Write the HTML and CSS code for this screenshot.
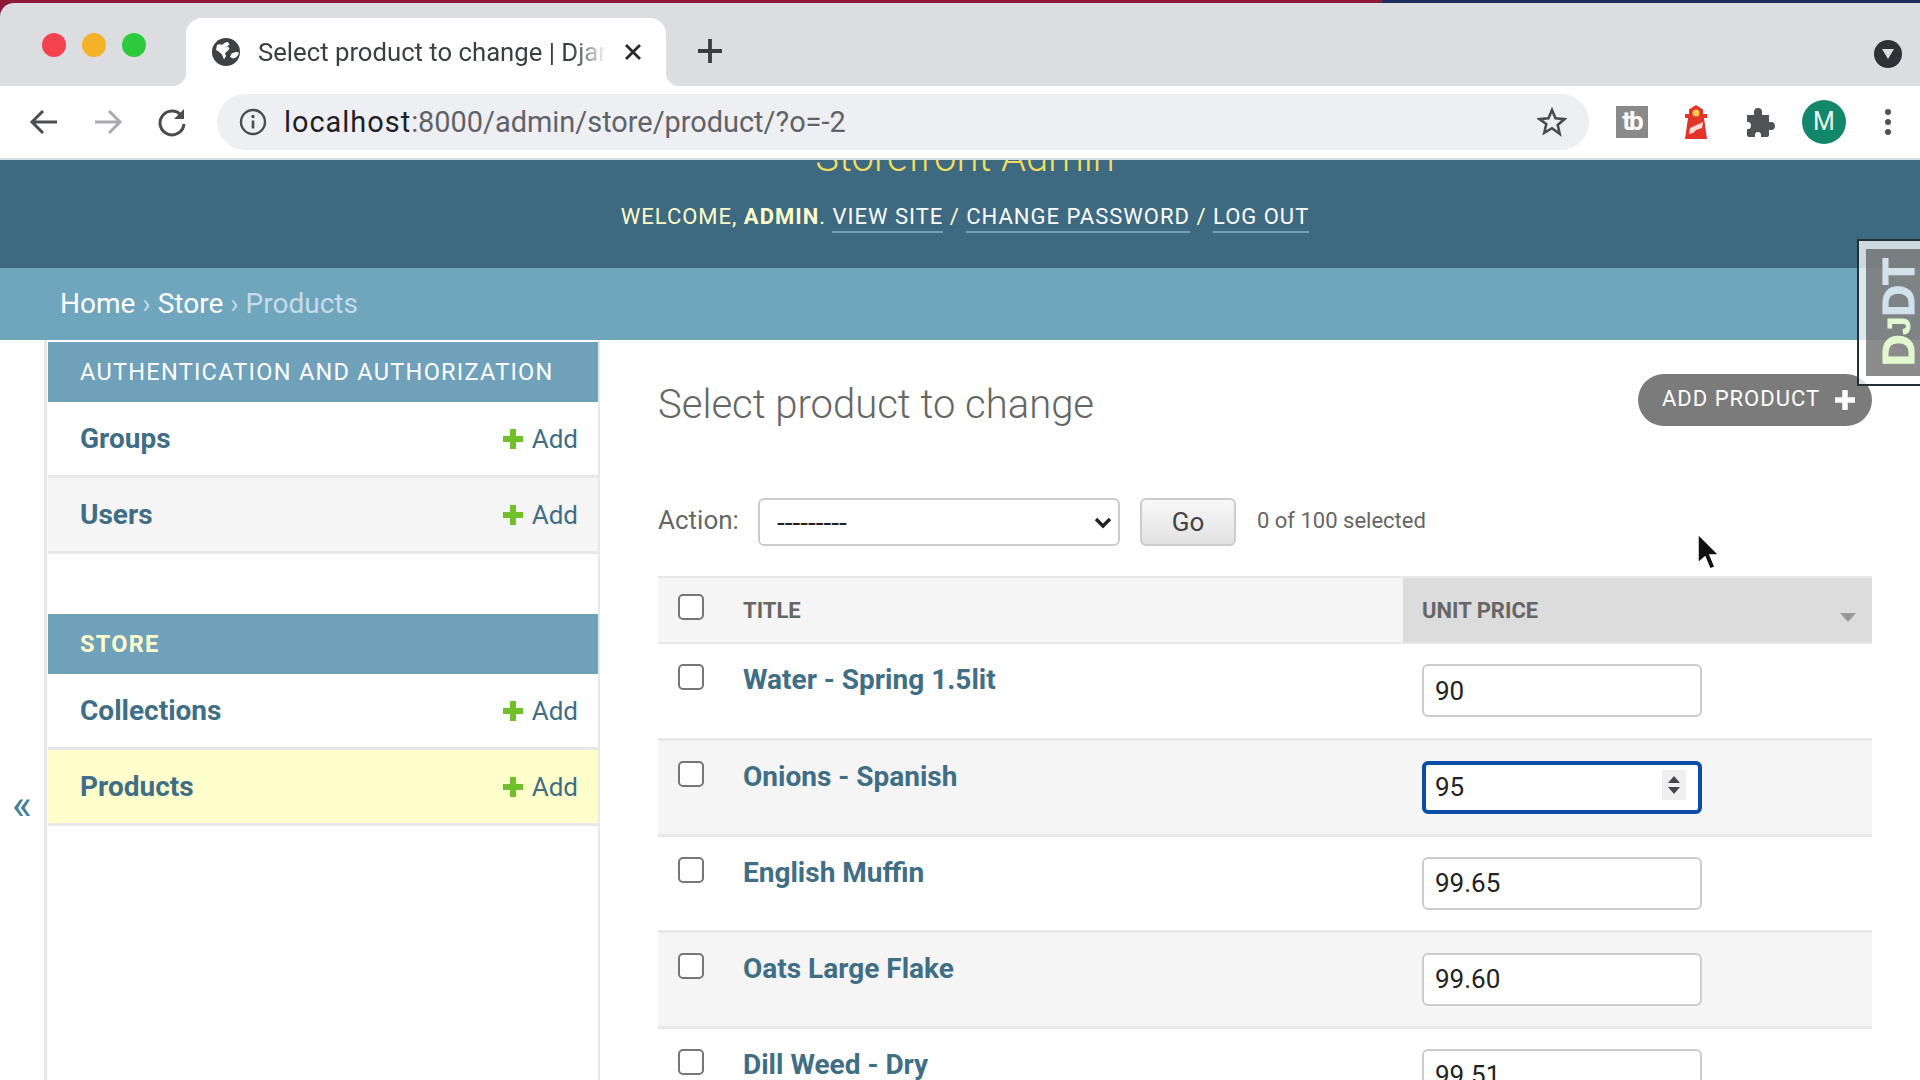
FILE: index.html
```html
<!DOCTYPE html>
<html lang="en">
<head>
    <meta charset="UTF-8">
    <title>Select product to change | Django site admin</title>
    <link rel="stylesheet" href="styles.css">
</head>
<body>
    <!-- Browser chrome -->
    <div class="tabstrip">
        <div class="lights">
            <span class="light red"></span>
            <span class="light yellow"></span>
            <span class="light green"></span>
        </div>
        <div class="tab">
            <svg class="globe" width="30" height="30" viewBox="0 0 30 30">
                <circle cx="15" cy="15" r="14" fill="#3f4145"/>
                <path d="M6 8c2-1 4-1 6 .5l3 2 2-1 1.500 2-2.500 3-2 1.500 1 3-2 3.500-2-5-4-3.500-2-1z" fill="#fff"/>
                <path d="M10 9.500c2-3 4-4.500 7-4.500l1.500 2.500-3 2.500z" fill="#fff"/>
                <path d="M19 20l1.500-3.500 4-1.500 3.500.5c-.5 2-1.500 3.500-3 5l-3 1z" fill="#fff"/>
            </svg>
            <span class="tab-title">Select product to change | Django site admin</span>
            <svg class="tab-close" width="20" height="20" viewBox="0 0 20 20">
                <path d="M3 3l14 14M17 3L3 17" stroke="#26282b" stroke-width="2.800"/>
            </svg>
        </div>
        <svg class="new-tab" width="26" height="26" viewBox="0 0 26 26">
            <path d="M13 1v24M1 13h24" stroke="#3a3c40" stroke-width="3.800"/>
        </svg>
        <div class="tab-menu">
            <svg width="14" height="12" viewBox="0 0 14 12"><path d="M1 1h12L7 11z" fill="#dcdde1"/></svg>
        </div>
    </div>

    <div class="toolbar">
        <svg class="nav-icon" width="30" height="30" viewBox="0 0 30 30">
            <path d="M28 15H4M14 4L3 15l11 11" fill="none" stroke="#4a4c50" stroke-width="3"/>
        </svg>
        <svg class="nav-icon" width="30" height="30" viewBox="0 0 30 30">
            <path d="M2 15h24M16 4l11 11-11 11" fill="none" stroke="#a9abae" stroke-width="3"/>
        </svg>
        <svg class="nav-icon" width="30" height="30" viewBox="0 0 30 30">
            <path d="M24.500 8.500A12 12 0 1 0 27 17" fill="none" stroke="#4a4c50" stroke-width="3"/>
            <path d="M27 2v10H17z" fill="#4a4c50"/>
        </svg>
        <div class="omnibox">
            <svg width="28" height="28" viewBox="0 0 28 28">
                <circle cx="14" cy="14" r="12" fill="none" stroke="#4a4c50" stroke-width="2.400"/>
                <path d="M14 12.500v8" stroke="#4a4c50" stroke-width="2.600"/>
                <circle cx="14" cy="8.500" r="1.700" fill="#4a4c50"/>
            </svg>
            <div class="url"><span class="host">localhost</span>:8000/admin/store/product/?o=-2</div>
            <svg class="star" width="30" height="30" viewBox="0 0 30 30">
                <path d="M15 3l3.500 8.300 9 .8-6.800 5.900 2 8.800L15 21.200l-7.700 4.600 2-8.800L2.500 12.100l9-.8z" fill="none" stroke="#4a4c50" stroke-width="2.600" stroke-linejoin="miter"/>
            </svg>
        </div>
        <div class="extensions">
            <span class="ext-tb">tb</span>
            <svg width="32" height="34" viewBox="0 0 32 34">
                <path d="M16 0l7 4.500V9h4v4h-3l3 21H5l3-21H5V9h4V4.500z" fill="#e3342a"/>
                <circle cx="16" cy="8" r="3.500" fill="#f7cb4d"/>
                <path d="M9 29l1-6 13-6-1 6-6 2-3 3z" fill="#f8dcd8"/>
            </svg>
            <svg width="30" height="30" viewBox="0 0 30 30">
                <path d="M2 8h7V5a4 4 0 0 1 8 0v3h7v7h2a4 4 0 0 1 0 8h-2v5a2 2 0 0 1-2 2h-6v-2a3 3 0 0 0-6 0v2H4a2 2 0 0 1-2-2v-6h2a4 4 0 0 0 0-7H2z" fill="#505256"/>
            </svg>
            <span class="avatar">M</span>
            <svg width="8" height="28" viewBox="0 0 8 28">
                <circle cx="4" cy="4" r="3" fill="#505256"/>
                <circle cx="4" cy="14" r="3" fill="#505256"/>
                <circle cx="4" cy="24" r="3" fill="#505256"/>
            </svg>
        </div>
    </div>

    <!-- Page -->
    <div class="page">
        <header class="site-header">
            <h1 class="branding">Storefront Admin</h1>
            <div class="user-tools">
                Welcome, <strong>admin</strong>. <a>View site</a> / <a>Change password</a> / <a>Log out</a>
            </div>
        </header>
        <nav class="breadcrumbs">
            <a>Home</a> <span class="sep">›</span> <a>Store</a> <span class="sep">›</span> <span class="current">Products</span>
        </nav>

        <div class="main">
            <div class="toggle-col"><span class="toggle">«</span></div>
            <aside class="sidebar">
                <section class="module">
                    <h2 class="module-title">Authentication and Authorization</h2>
                    <div class="module-row">
                        <a class="model">Groups</a>
                        <a class="addlink"><svg width="20" height="20" viewBox="0 0 20 20"><path d="M10 0v20M0 10h20" stroke="#70bf2b" stroke-width="6"/></svg>Add</a>
                    </div>
                    <div class="module-row alt">
                        <a class="model">Users</a>
                        <a class="addlink"><svg width="20" height="20" viewBox="0 0 20 20"><path d="M10 0v20M0 10h20" stroke="#70bf2b" stroke-width="6"/></svg>Add</a>
                    </div>
                </section>
                <section class="module">
                    <h2 class="module-title active">Store</h2>
                    <div class="module-row">
                        <a class="model">Collections</a>
                        <a class="addlink"><svg width="20" height="20" viewBox="0 0 20 20"><path d="M10 0v20M0 10h20" stroke="#70bf2b" stroke-width="6"/></svg>Add</a>
                    </div>
                    <div class="module-row selected">
                        <a class="model">Products</a>
                        <a class="addlink"><svg width="20" height="20" viewBox="0 0 20 20"><path d="M10 0v20M0 10h20" stroke="#70bf2b" stroke-width="6"/></svg>Add</a>
                    </div>
                </section>
            </aside>

            <main class="content">
                <div class="content-head">
                    <h1 class="content-title">Select product to change</h1>
                    <a class="add-product">Add product
                        <svg width="20" height="20" viewBox="0 0 20 20"><path d="M10 0v20M0 10h20" stroke="#fff" stroke-width="5.500"/></svg>
                    </a>
                </div>

                <form class="actions">
                    <label class="action-label" for="action">Action:</label>
                    <div class="select-wrap">
                        <select id="action">
                            <option>---------</option>
                        </select>
                        <svg class="select-arrow" width="18" height="12" viewBox="0 0 18 12"><path d="M2 2l7 7 7-7" fill="none" stroke="#222" stroke-width="3.400"/></svg>
                    </div>
                    <button type="button" class="go">Go</button>
                    <span class="counter">0 of 100 selected</span>
                </form>

                <table class="results">
                    <thead>
                        <tr>
                            <th class="col-check"><input type="checkbox"></th>
                            <th class="col-title">Title</th>
                            <th class="col-price sorted">Unit price<span class="sort-arrow"></span></th>
                        </tr>
                    </thead>
                    <tbody>
                        <tr>
                            <td class="col-check"><input type="checkbox"></td>
                            <td class="col-title"><a>Water - Spring 1.5lit</a></td>
                            <td class="col-price"><input class="price" type="text" value="90"></td>
                        </tr>
                        <tr class="alt">
                            <td class="col-check"><input type="checkbox"></td>
                            <td class="col-title"><a>Onions - Spanish</a></td>
                            <td class="col-price">
                                <div class="price-wrap">
                                    <input class="price focused" type="text" value="95">
                                    <span class="spinner">
                                        <svg width="14" height="20" viewBox="0 0 14 20"><path d="M7 1l6 7H1zM7 19l6-7H1z" fill="#45474a"/></svg>
                                    </span>
                                </div>
                            </td>
                        </tr>
                        <tr>
                            <td class="col-check"><input type="checkbox"></td>
                            <td class="col-title"><a>English Muffin</a></td>
                            <td class="col-price"><input class="price" type="text" value="99.65"></td>
                        </tr>
                        <tr class="alt">
                            <td class="col-check"><input type="checkbox"></td>
                            <td class="col-title"><a>Oats Large Flake</a></td>
                            <td class="col-price"><input class="price" type="text" value="99.60"></td>
                        </tr>
                        <tr>
                            <td class="col-check"><input type="checkbox"></td>
                            <td class="col-title"><a>Dill Weed - Dry</a></td>
                            <td class="col-price"><input class="price" type="text" value="99.51"></td>
                        </tr>
                    </tbody>
                </table>
            </main>
        </div>
    </div>

    <!-- Debug toolbar handle and mouse pointer float over the page -->
    <div class="djdt">
        <div class="djdt-inner"><span class="djdt-text"><span class="dj">D<small>J</small></span>DT</span></div>
    </div>
    <svg class="cursor" width="24" height="38" viewBox="0 0 24 38">
        <path d="M2 1v29l7-6 5 12 5-2-5-12h9z" fill="#111" stroke="#fff" stroke-width="1.500"/>
    </svg>
</body>
</html>
```

FILE: styles.css
```css
* {
    box-sizing: border-box;
}
html, body {
    margin: 0;
    height: 100%;
    overflow: hidden;
}
body {
    position: relative;
    font-family: Roboto, "Liberation Sans", sans-serif;
    background: linear-gradient(to right, #8e1a3a 1382px, #1d2f5c 1382px);
    color: #333;
    width: 1920px;
    height: 1080px;
}
a {
    color: inherit;
    text-decoration: none;
}

/* Browser chrome */
.tabstrip {
    height: 83px;
    margin-top: 3px;
    display: flex;
    align-items: flex-end;
    position: relative;
    background: #dcdde1;
    border-top-left-radius: 14px;
}
.lights {
    width: 186px;
    height: 83px;
    display: flex;
    gap: 16px;
    padding: 30px 0 0 42px;
}
.light {
    width: 24px;
    height: 24px;
    border-radius: 50%;
}
.light.red { background: #f5424f; }
.light.yellow { background: #f5b128; }
.light.green { background: #2ccb3e; }
.tab {
    position: relative;
    width: 480px;
    height: 68px;
    display: flex;
    align-items: center;
    padding: 0 16px 0 25px;
    background: #fff;
    border-radius: 16px 16px 0 0;
}
.tab::before,
.tab::after {
    content: "";
    position: absolute;
    bottom: 0;
    width: 14px;
    height: 14px;
}
.tab::before {
    left: -14px;
    background: radial-gradient(circle at 0 0, transparent 14px, #fff 14.500px);
}
.tab::after {
    right: -14px;
    background: radial-gradient(circle at 100% 0, transparent 14px, #fff 14.500px);
}
.tab-title {
    width: 349px;
    margin-left: 17px;
    font-size: 25.700px;
    color: #3c4043;
    white-space: nowrap;
    overflow: hidden;
    -webkit-mask-image: linear-gradient(to right, #000 90%, transparent 100%);
    mask-image: linear-gradient(to right, #000 90%, transparent 100%);
}
.tab-close {
    margin-left: 16px;
}
.new-tab {
    align-self: center;
    margin-left: 31px;
    position: relative;
    top: 6px;
}
.tab-menu {
    margin-left: auto;
    margin-right: 18px;
    align-self: center;
    width: 28px;
    height: 28px;
    border-radius: 50%;
    background: #2f3136;
    display: flex;
    align-items: center;
    justify-content: center;
    position: relative;
    top: 9px;
}
.toolbar {
    height: 74px;
    display: flex;
    align-items: center;
    padding: 0 0 0 29px;
    gap: 34px;
    background: #fff;
    border-bottom: 2px solid #d5dce3;
}
.nav-icon {
    flex: none;
}
.omnibox {
    width: 1372px;
    height: 56px;
    margin-left: -4px;
    display: flex;
    align-items: center;
    padding: 0 22px 0 22px;
    background: #eeeff3;
    border-radius: 28px;
}
.url {
    margin-left: 17px;
    font-size: 28.900px;
    color: #5f6368;
    white-space: nowrap;
}
.url .host {
    color: #202124;
    letter-spacing: 1px;
}
.star {
    margin-left: auto;
}
.extensions {
    display: flex;
    align-items: center;
    margin-left: -7px;
    flex: none;
}
.ext-tb {
    width: 32px;
    height: 32px;
    background: #8a8a8a;
    color: #fff;
    font-weight: 700;
    font-size: 26px;
    line-height: 30px;
    text-align: center;
    letter-spacing: -2px;
}
.extensions svg:nth-child(2) {
    margin-left: 32px;
}
.extensions svg:nth-child(3) {
    margin-left: 33px;
}
.avatar {
    width: 44px;
    height: 44px;
    margin-left: 27px;
    border-radius: 50%;
    background: #12876a;
    color: #e6f5f0;
    font-size: 25px;
    line-height: 44px;
    text-align: center;
}
.extensions svg:nth-child(5) {
    margin-left: 38px;
}

/* Admin header */
.page {
    height: 920px;
    overflow: hidden;
    background: #fff;
}
.site-header {
    height: 108px;
    overflow: hidden;
    padding-left: 10px;
    background: #3d6a80;
    text-align: center;
}
.branding {
    margin: -22px 0 0;
    font-size: 40px;
    line-height: 40px;
    font-weight: 300;
    color: #f5dd5d;
}
.user-tools {
    margin-top: 24px;
    font-size: 22px;
    font-weight: 400;
    line-height: 30px;
    letter-spacing: 1px;
    text-transform: uppercase;
    color: #ffc;
}
.user-tools strong {
    font-weight: 700;
}
.user-tools a {
    color: #fff;
    padding-bottom: 2px;
    border-bottom: 2px solid #789fb3;
}
.breadcrumbs {
    height: 72px;
    padding-left: 60px;
    font-size: 28px;
    font-weight: 400;
    line-height: 72px;
    background: #70a6bd;
    color: #fff;
}
.breadcrumbs .sep,
.breadcrumbs .current {
    color: #c4dce8;
}

/* Sidebar */
.main {
    display: flex;
    height: 740px;
}
.toggle-col {
    width: 44px;
    flex: none;
    position: relative;
}
.toggle {
    position: absolute;
    top: 435px;
    left: 12px;
    font-size: 42px;
    line-height: 60px;
    color: #447e9b;
}
.sidebar {
    width: 556px;
    flex: none;
    padding-top: 2px;
    background: #fff;
    border-left: 3px solid #e8e8e8;
    border-right: 2px solid #e8e8e8;
    padding-left: 1px;
}
.module {
    margin-bottom: 60px;
}
.module-title {
    margin: 0;
    height: 60px;
    padding-left: 32px;
    font-size: 23.500px;
    font-weight: 400;
    line-height: 60px;
    letter-spacing: 1.280px;
    text-transform: uppercase;
    background: #70a1ba;
    color: #fff;
}
.module-title.active {
    font-weight: 700;
    color: #ffc;
}
.module-row {
    height: 76px;
    display: flex;
    align-items: center;
    justify-content: space-between;
    padding: 0 20px 0 32px;
    border-bottom: 3px solid #e8e8e8;
    background: #fff;
}
.module-row.alt {
    background: #f5f5f5;
}
.module-row.selected {
    background: #ffc;
}
.model {
    font-size: 28px;
    font-weight: 700;
    color: #3f6e85;
}
.addlink {
    display: flex;
    align-items: center;
    gap: 9px;
    font-size: 26px;
    font-weight: 400;
    color: #3f6e85;
}

/* Content */
.content {
    flex: 1;
    min-width: 0;
    padding: 34px 48px 0 58px;
}
.content-head {
    height: 52px;
    display: flex;
    align-items: center;
    justify-content: space-between;
}
.content-title {
    margin: 8px 0 0;
    font-size: 40px;
    font-weight: 300;
    color: #666;
}
.add-product {
    width: 234px;
    height: 52px;
    display: flex;
    align-items: center;
    justify-content: space-between;
    padding: 0 17px 4px 24px;
    border-radius: 26px;
    background: #7b7b7b;
    color: #fff;
    font-size: 22px;
    letter-spacing: 1px;
    text-transform: uppercase;
}
.add-product svg {
    position: relative;
    top: 2px;
}
.actions {
    height: 48px;
    margin-top: 72px;
    display: flex;
    align-items: center;
}
.action-label {
    width: 100px;
    padding-bottom: 4px;
    font-size: 26px;
    font-weight: 400;
    color: #666;
}
.select-wrap {
    position: relative;
    width: 362px;
    height: 48px;
}
.select-wrap select {
    appearance: none;
    width: 362px;
    height: 48px;
    padding: 0 17px;
    font-family: inherit;
    font-size: 28px;
    color: #222;
    background: #fff;
    border: 2px solid #ccc;
    border-radius: 6px;
}
.select-arrow {
    position: absolute;
    top: 19px;
    right: 8px;
}
.go {
    width: 96px;
    height: 48px;
    margin-left: 20px;
    font-family: inherit;
    font-size: 26px;
    color: #444;
    background: linear-gradient(#f8f8f8, #e2e2e2);
    border: 2px solid #ccc;
    border-radius: 6px;
}
.counter {
    margin-left: 21px;
    padding-bottom: 4px;
    font-size: 22px;
    font-weight: 400;
    color: #666;
}

/* Result list */
.results {
    width: 100%;
    margin-top: 30px;
    border-collapse: collapse;
    table-layout: fixed;
}
.results th {
    height: 66px;
    padding: 0;
    text-align: left;
    vertical-align: middle;
    background: #f5f5f5;
    border-top: 2px solid #e8e8e8;
    border-bottom: 2px solid #e8e8e8;
    font-size: 22px;
    font-weight: 700;
    color: #666;
    text-transform: uppercase;
}
.results td {
    height: 96px;
    padding: 0;
    vertical-align: top;
    border-bottom: 3px solid #e8e8e8;
}
.results tr.alt td {
    background: #f5f5f5;
}
.results input[type="checkbox"] {
    appearance: none;
    display: block;
    width: 26px;
    height: 26px;
    margin: 0;
    background: #fff;
    border: 2px solid #767676;
    border-radius: 5px;
}
.col-check {
    width: 85px;
    padding-left: 20px !important;
}
.results th.col-check input {
    margin-top: -6px;
}
.results td.col-check input {
    margin-top: 20px;
}
.col-title {
    width: 660px;
}
.col-title a {
    display: block;
    padding-top: 19px;
    font-size: 28px;
    line-height: 34px;
    font-weight: 700;
    color: #3f6e85;
}
.col-price {
    padding-left: 19px !important;
}
.results th.sorted {
    position: relative;
    background: #dcdcdc;
}
.sort-arrow {
    position: absolute;
    right: 16px;
    top: 35px;
    width: 0;
    height: 0;
    border-left: 8px solid transparent;
    border-right: 8px solid transparent;
    border-top: 9px solid #999;
}
.price-wrap {
    position: relative;
    width: 280px;
}
.price {
    display: block;
    width: 280px;
    height: 53px;
    margin-top: 20px;
    padding: 0 11px;
    font-family: inherit;
    font-size: 26px;
    color: #222;
    background: #fff;
    border: 2px solid #ccc;
    border-radius: 6px;
    outline: none;
}
.price.focused {
    border: 4px solid #0c4da8;
    padding: 0 9px;
}
.spinner {
    position: absolute;
    top: 9px;
    right: 16px;
    width: 24px;
    height: 30px;
    display: flex;
    align-items: center;
    justify-content: center;
    background: #efefef;
}

/* Overlays */
.djdt {
    position: absolute;
    left: 1857px;
    top: 239px;
    width: 70px;
    height: 147px;
    padding: 8px 0 8px 7px;
    background: rgba(255, 255, 255, 0.75);
    border: 2px solid #22303a;
}
.djdt-inner {
    height: 100%;
    display: flex;
    align-items: center;
    padding-left: 16px;
    background: rgba(70, 70, 70, 0.62);
}
.djdt-text {
    writing-mode: vertical-rl;
    transform: rotate(180deg);
    font-family: "Liberation Sans", sans-serif;
    font-size: 44px;
    line-height: 34px;
    font-weight: 700;
    color: #d2e2ec;
    -webkit-text-stroke: 1px currentColor;
}
.djdt-text .dj {
    color: #e3f8cf;
}
.djdt-text small {
    font-size: 32px;
}
.cursor {
    position: absolute;
    left: 1696px;
    top: 533px;
}
```
